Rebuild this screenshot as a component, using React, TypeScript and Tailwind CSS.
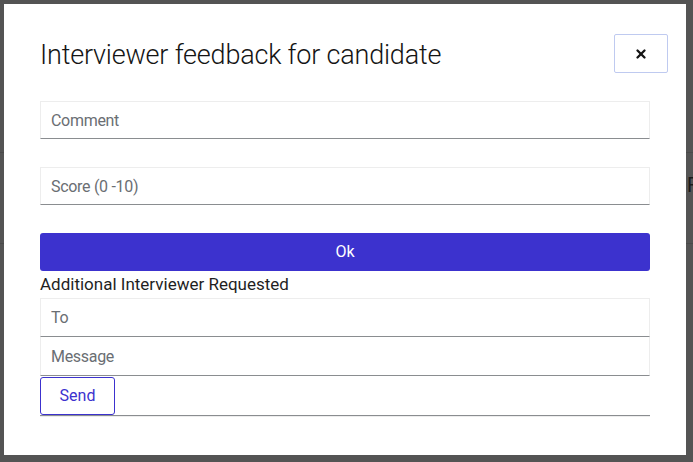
import { X } from "lucide-react";

const font = { fontFamily: "Roboto, 'Noto Sans', sans-serif" };

function Field({ placeholder, className = "" }: { placeholder: string; className?: string }) {
  return (
    <input
      type="text"
      placeholder={placeholder}
      className={`w-full px-[10px] bg-white border border-[#ededed] border-b-[#8a8d90] text-[16px] tracking-[-0.3px] text-[#151515] placeholder:text-[#6a6e73] outline-none ${className}`}
    />
  );
}

export default function App() {
  return (
    <div className="relative w-[693px] h-[462px] bg-[#545454] overflow-hidden" style={font}>
      {/* page behind the backdrop */}
      <div className="absolute left-0 right-0 top-[152px] h-px bg-[#4a4a4a]" />
      <div className="absolute left-0 right-0 top-[243px] h-px bg-[#4a4a4a]" />
      <div className="absolute left-[687px] top-[175px] text-[20px] leading-none text-[#1a1a1a]">F</div>

      {/* modal */}
      <div className="absolute left-[4px] top-[4px] w-[682px] h-[451px] bg-white px-[36px] pt-[30px]">
        <div className="flex items-start justify-between">
          <h1 className="pt-[5px] text-[27px] leading-[32px] font-light text-[#151515] tracking-[-0.2px]">
            Interviewer feedback for candidate
          </h1>
          <button className="mr-[-18px] w-[54px] h-[39px] flex items-center justify-center border border-[#bfcaf0] rounded-[2px] text-[#151515]">
            <X size={14} strokeWidth={4} />
          </button>
        </div>

        <div className="w-[610px] mt-[28px]">
          <Field placeholder="Comment" className="h-[38px]" />
          <div className="h-[28px]" />
          <Field placeholder="Score (0 -10)" className="h-[38px]" />
          <div className="h-[28px]" />
          <button className="w-full h-[38px] rounded-[3px] bg-[#3c32ce] text-white text-[16px]">Ok</button>
          <div className="pt-[3px] text-[17px] leading-[20px] text-[#1f1f1f]">Additional Interviewer Requested</div>
          <div className="mt-[4px]">
            <Field placeholder="To" className="h-[39px]" />
            <Field placeholder="Message" className="h-[39px] border-t-0" />
            <div className="pt-px border-b border-[#8a8d90] shadow-[0_1px_0_#ededed]">
              <button className="w-[75px] h-[38px] border border-[#3c32ce] rounded-[3px] text-[#3c32ce] text-[16px]">
                Send
              </button>
            </div>
          </div>
        </div>
      </div>
    </div>
  );
}
